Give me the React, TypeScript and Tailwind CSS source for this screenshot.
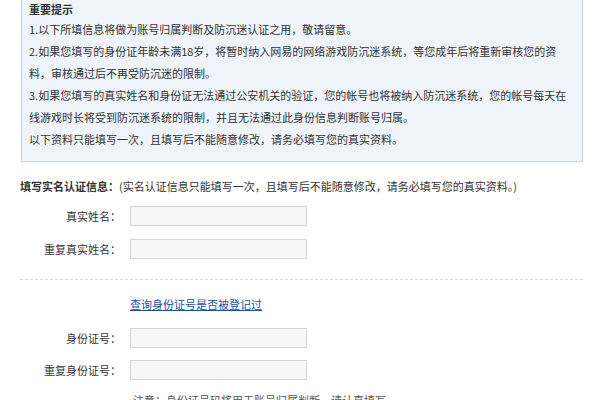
const notice = [
  '1.以下所填信息将做为账号归属判断及防沉迷认证之用，敬请留意。',
  '2.如果您填写的身份证年龄未满18岁，将暂时纳入网易的网络游戏防沉迷系统，等您成年后将重新审核您的资',
  '料，审核通过后不再受防沉迷的限制。',
  '3.如果您填写的真实姓名和身份证无法通过公安机关的验证，您的帐号也将被纳入防沉迷系统，您的帐号每天在',
  '线游戏时长将受到防沉迷系统的限制，并且无法通过此身份信息判断账号归属。',
  '以下资料只能填写一次，且填写后不能随意修改，请务必填写您的真实资料。',
]

const Field = ({ label, top }: { label: string; top: string }) => (
  <div className={`flex items-center ${top}`}>
    <div className="w-[101px] text-right leading-[20px]">{label}</div>
    <div className="ml-[9px] h-[20px] w-[177px] border border-[#d6d6d6] bg-[#f8f8f8]"></div>
  </div>
)

export default function App() {
  return (
    <div className="h-[400px] w-[600px] overflow-hidden bg-white font-['Noto_Sans_CJK_SC',sans-serif] text-[11px] text-[#333]">
      {/*=========== notice box ===========*/}
      <div className="ml-[21px] w-[562px] border border-t-0 border-[#c3d4e2] bg-[#eef4f9] pb-[11px] pl-[7px]">
        <div className="font-bold leading-[18px]">重要提示</div>
        {notice.map((line, i) => (
          <div key={i} className="whitespace-nowrap leading-[22px]">
            {line}
          </div>
        ))}
      </div>

      {/*=========== form ===========*/}
      <div className="pl-[20px]">
        <div className="mt-[16px] whitespace-nowrap leading-[16px]">
          <span className="font-bold">填写实名认证信息：</span>
          (实名认证信息只能填写一次，且填写后不能随意修改，请务必填写您的真实资料。)
        </div>
        <Field label="真实姓名：" top="mt-[12px]" />
        <Field label="重复真实姓名：" top="mt-[13px]" />

        <div className="mt-[20px] w-[563px] border-t border-dashed border-[#d9d9d9]"></div>

        <div className="mt-[16px] pl-[110px] leading-[16px]">
          <a href="#" className="text-[#1d4f9c] underline">查询身份证号是否被登记过</a>
        </div>
        <Field label="身份证号：" top="mt-[16px]" />
        <Field label="重复身份证号：" top="mt-[12px]" />

        <div className="mt-[12px] pl-[113px] leading-[16px] text-[#555]">
          注意：身份证号码将用于账号归属判断，请认真填写。
        </div>
      </div>
    </div>
  )
}
